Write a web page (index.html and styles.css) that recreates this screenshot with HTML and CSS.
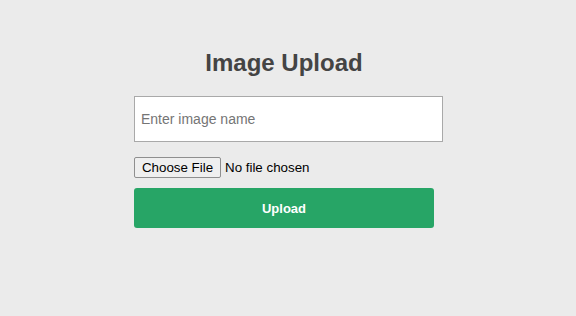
FILE: index.html
```html
<!DOCTYPE html>
<html>
<head>
<meta charset="utf-8">
<link rel="stylesheet" href="styles.css">
</head>
<body>
<div class="card">
  <h2 class="title">Image Upload</h2>
  <form class="form">
    <input class="name-input" type="text" placeholder="Enter image name">
    <input class="file-input" type="file">
    <button class="upload-btn" type="button">Upload</button>
  </form>
</div>
</body>
</html>
```

FILE: styles.css
```css
html, body {
  margin: 0;
  padding: 0;
  background: #ebebeb;
  font-family: "Liberation Sans", Arial, sans-serif;
}

.card {
  width: 308px;
  margin: 0 auto;
  padding-top: 49px;
}

.title {
  width: 300px;
  margin: 0 0 20px 0;
  text-align: center;
  font-size: 24px;
  font-weight: bold;
  line-height: 27px;
  color: #444444;
}

.form {
  display: flex;
  flex-direction: column;
  align-items: flex-start;
}

.name-input {
  box-sizing: border-box;
  width: 309px;
  height: 46px;
  margin: 0 0 15px 0;
  padding: 0 6px;
  border: 1px solid #a9a9a9;
  background: #ffffff;
  font-family: "Liberation Sans", Arial, sans-serif;
  font-size: 14px;
  color: #333;
  outline: none;
}

.name-input::placeholder {
  color: #757575;
}

.file-input {
  margin: 0 0 10px 0;
  padding: 0;
  height: 21px;
  font-family: "Liberation Sans", Arial, sans-serif;
  font-size: 13.33px;
  color: #000;
}

.file-input::file-selector-button {
  box-sizing: border-box;
  width: 87px;
  height: 21px;
  margin: 0 4px 0 0;
  padding: 0;
  border: 1px solid #8f8f8f;
  border-radius: 2px;
  background: #efefef;
  font-family: "Liberation Sans", Arial, sans-serif;
  font-size: 13.33px;
  color: #000;
}

.upload-btn {
  box-sizing: border-box;
  width: 300px;
  height: 40px;
  margin: 0;
  border: none;
  border-radius: 3px;
  background: #27a566;
  color: #ffffff;
  font-family: "Liberation Sans", Arial, sans-serif;
  font-size: 13px;
  font-weight: bold;
}
```
